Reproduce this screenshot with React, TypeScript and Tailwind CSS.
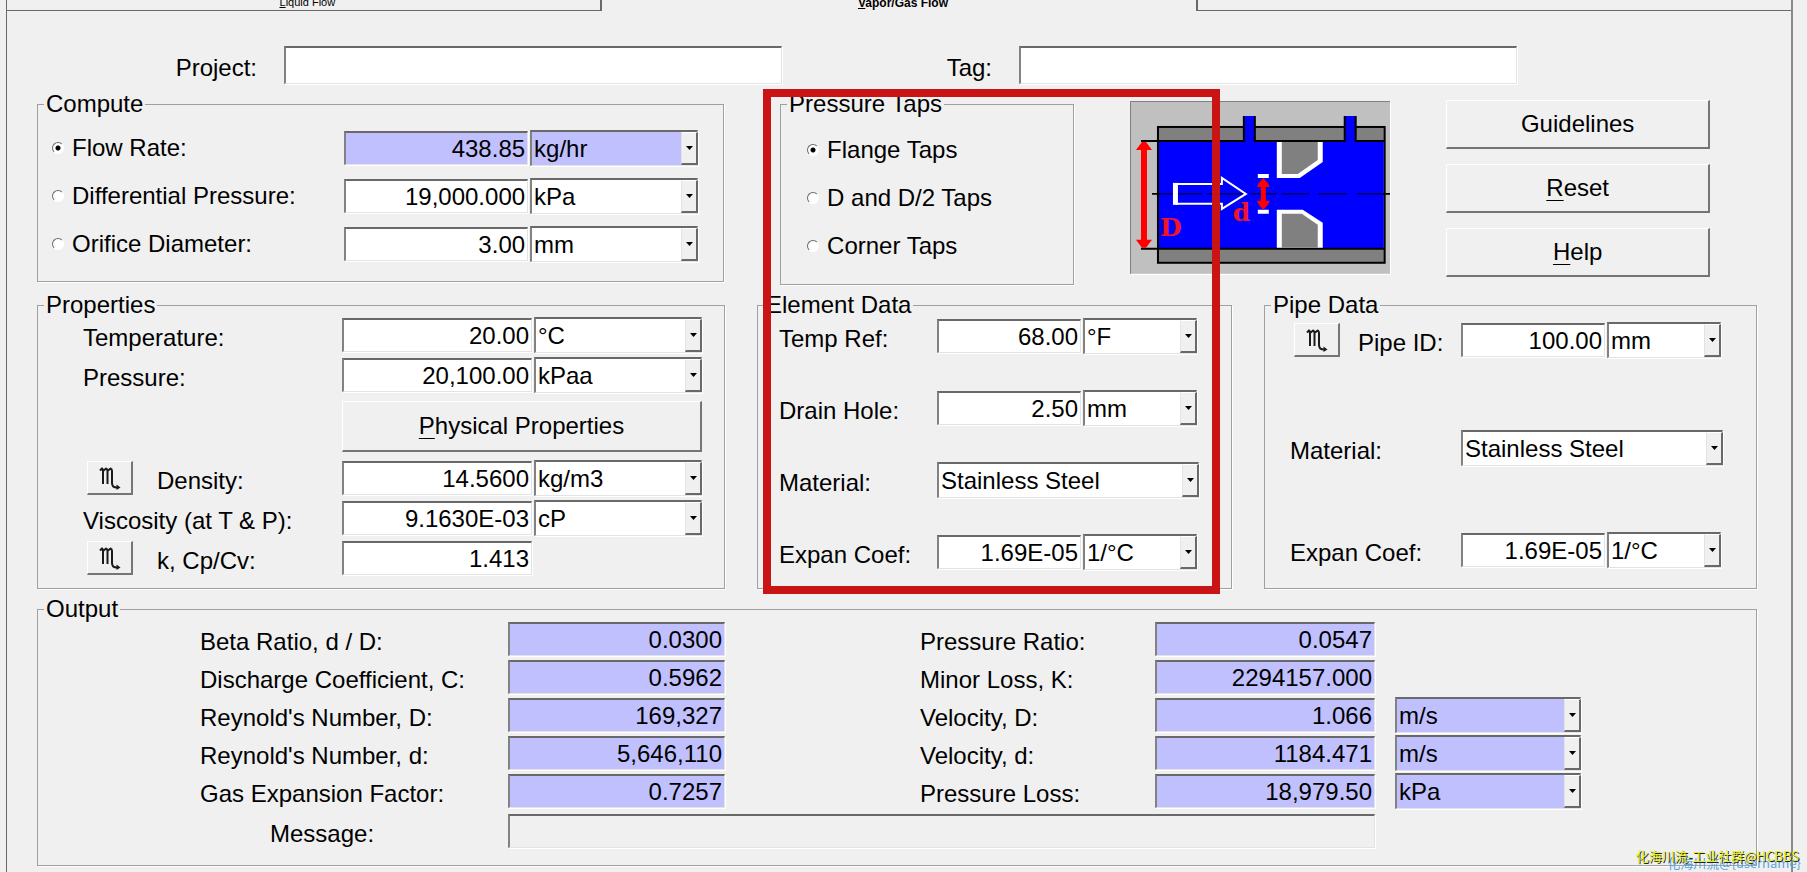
import { ReactNode, useState } from 'react';

// ===== Shared styles =====
const sunken =
  'rounded-none border-t-2 border-l-2 border-b border-r border-t-[#696969] border-l-[#828282] border-b-[#e3e3e3] border-r-[#e3e3e3] shadow-[1px_1px_0_#ffffff]';

// ===== 1. Group: etched fieldset with a caption =====
interface GroupProps {
  title: string;
  children: ReactNode;
  className?: string;
}

function Group({ title, children, className = '' }: GroupProps) {
  return (
    <fieldset className="min-w-0 border border-[#a0a0a0] shadow-[1px_1px_0_#ffffff]">
      <legend className="ml-1.5 px-0.5 leading-6">{title}</legend>
      <div className={className}>{children}</div>
    </fieldset>
  );
}

// ===== 2. ValueBox: numeric entry =====
interface ValueBoxProps {
  id: string;
  value: string;
  computed?: boolean;
  className?: string;
}

function ValueBox({ id, value, computed = false, className = '' }: ValueBoxProps) {
  return (
    <input
      id={id}
      type="text"
      defaultValue={value}
      readOnly={computed}
      className={`h-[34px] min-w-0 pr-0.5 text-right outline-none ${sunken} ${computed ? 'bg-[#c0c0ff]' : 'bg-white'} ${className}`}
    />
  );
}

// ===== 3. Combo: drop-down with a raised arrow =====
interface ComboProps {
  label: string;
  options: string[];
  id?: string;
  computed?: boolean;
  className?: string;
}

function Combo({ label, options, id, computed = false, className = '' }: ComboProps) {
  return (
    <div className={`relative h-9 ${className}`}>
      <select
        id={id}
        aria-label={label}
        className={`h-9 w-full appearance-none pl-0.5 outline-none ${sunken} ${computed ? 'bg-[#c0c0ff]' : 'bg-white'}`}
      >
        {options.map((option) => (
          <option key={option}>{option}</option>
        ))}
      </select>
      <span className="pointer-events-none absolute top-0.5 right-0 bottom-px flex w-[17px] items-center justify-center border-t border-l border-r-2 border-b-2 border-t-white border-l-[#e3e3e3] border-r-[#696969] border-b-[#696969] bg-[#f0f0f0]">
        <svg width="7" height="4" viewBox="0 0 7 4" aria-hidden="true">
          <path d="M0 0h7L3.5 4z" fill="#000" />
        </svg>
      </span>
    </div>
  );
}

// ===== 4. Buttons =====
interface PushButtonProps {
  children: ReactNode;
  label?: string;
  className?: string;
}

function PushButton({ children, label, className = '' }: PushButtonProps) {
  return (
    <button
      type="button"
      aria-label={label}
      className={`flex items-center justify-center border-t border-l border-r-2 border-b-2 border-t-white border-l-white border-r-[#757575] border-b-[#757575] bg-[#f0f0f0] ${className}`}
    >
      {children}
    </button>
  );
}

function MaterialButton({ label }: { label: string }) {
  return (
    <PushButton label={label} className="h-[34px] w-[46px] shrink-0">
      <svg width="22" height="24" viewBox="0 0 22 24" fill="none" stroke="#1a1a1a" aria-hidden="true">
        <path d="M1 4.500L3 2.500C4 3 4 4 4 5V18M4 5L7 2.500C8.500 3 8.500 4 8.500 5V18M8.500 5L11.500 2.500C13 3 13 4 13 5V17C13 20 14.500 21.500 18 21.500" strokeWidth="2" />
        <path d="M17.500 18.500L21.500 21.500L17.500 24z" fill="#1a1a1a" stroke="none" />
      </svg>
    </PushButton>
  );
}

// ===== 5. RadioRow =====
interface RadioRowProps {
  id: string;
  name: string;
  label: string;
  checked: boolean;
  onSelect: () => void;
}

function RadioRow({ id, name, label, checked, onSelect }: RadioRowProps) {
  return (
    <div className="flex h-9 min-w-0 items-center gap-2">
      <input
        id={id}
        type="radio"
        name={name}
        checked={checked}
        onChange={onSelect}
        className="size-3 shrink-0 appearance-none rounded-full border border-t-[#696969] border-l-[#696969] border-r-white border-b-white bg-white checked:bg-[radial-gradient(circle,#000_2px,#fff_3px)]"
      />
      <label htmlFor={id} className="whitespace-nowrap">
        {label}
      </label>
    </div>
  );
}

// ===== 6. Orifice drawing =====
function OrificeDiagram() {
  return (
    <svg viewBox="0 0 261 173" className="block w-full" role="img" aria-label="Orifice plate">
      <rect width="261" height="173" fill="#c0c0c0" />
      <path d="M.5 173V.5H261" fill="none" stroke="#808080" />
      {/* pipe wall and fluid */}
      <rect x="28" y="26" width="227" height="136" fill="#808080" stroke="#000" strokeWidth="2" />
      <rect x="29" y="40" width="225" height="108" fill="#0000ff" />
      <path d="M11 40H255M11 148H255" stroke="#000" strokeWidth="2" />
      {/* taps */}
      <path d="M113 15H126V41H113zM214 15H227V41H214z" fill="#000" />
      <path d="M115 15H124V42H115zM216 15H225V42H216z" fill="#0000ff" />
      {/* orifice plate */}
      <path d="M147 41V77H170L193 61V41zM147 147V109H173L193 122V147z" fill="#fff" />
      <path d="M152 41V73H168L188 59V41zM152 147V113H172L188 124V147z" fill="#808080" />
      {/* flow arrow */}
      <path d="M22 93H30M253 93H261" stroke="#000" strokeWidth="2" />
      <path d="M30 93H72M77 93H114M121 93H147M152 93H179M189 93H217M227 93H253" stroke="#00006c" strokeWidth="2" />
      <path d="M46 83H92V77L116 93L92 108V103H46" fill="none" stroke="#fff" strokeWidth="2" />
      <path d="M43 82H48V104H43z" fill="#fff" />
      {/* dimensions */}
      <path d="M128 73H139V77H128zM128 109H139V113H128z" fill="#fff" />
      <path d="M133.500 77L138 82L140 86H136V100H140L138 104L133.500 109L129 104L127 100H131V86H127L129 82z" fill="#f00" />
      <path d="M12 41H16L19 45L22 49H17V139H22L19 143L16 147H12L9 143L6 139H11V49H6L9 45z" fill="#f00" />
      <text x="30" y="135" fill="#f01428" fontFamily="DejaVu Serif" fontSize="25" fontWeight="700">
        D
      </text>
      <text x="103" y="120" fill="#f01428" fontFamily="DejaVu Serif" fontSize="25" fontWeight="700">
        d
      </text>
    </svg>
  );
}

// ===== Data =====
const computeRows = [
  { id: 'flow-rate', label: 'Flow Rate:', value: '438.85', units: ['kg/hr', 'kg/s'] },
  { id: 'diff-pressure', label: 'Differential Pressure:', value: '19,000.000', units: ['kPa', 'bar'] },
  { id: 'orifice-diameter', label: 'Orifice Diameter:', value: '3.00', units: ['mm', 'in'] },
];

const tapTypes = ['Flange Taps', 'D and D/2 Taps', 'Corner Taps'];

const outputLeft = [
  { id: 'beta', label: 'Beta Ratio, d / D:', value: '0.0300' },
  { id: 'discharge', label: 'Discharge Coefficient, C:', value: '0.5962' },
  { id: 'reynolds-pipe', label: "Reynold's Number, D:", value: '169,327' },
  { id: 'reynolds-orifice', label: "Reynold's Number, d:", value: '5,646,110' },
  { id: 'expansion', label: 'Gas Expansion Factor:', value: '0.7257' },
];

const outputRight = [
  { id: 'pressure-ratio', label: 'Pressure Ratio:', value: '0.0547', units: null },
  { id: 'minor-loss', label: 'Minor Loss, K:', value: '2294157.000', units: null },
  { id: 'velocity-pipe', label: 'Velocity, D:', value: '1.066', units: ['m/s', 'ft/s'] },
  { id: 'velocity-orifice', label: 'Velocity, d:', value: '1184.471', units: ['m/s', 'ft/s'] },
  { id: 'pressure-loss', label: 'Pressure Loss:', value: '18,979.50', units: ['kPa', 'bar'] },
];

const materials = ['Stainless Steel', 'Carbon Steel'];

// ===== 7. Field rows =====
interface FieldLabelProps {
  htmlFor: string;
  children: ReactNode;
  className?: string;
}

function FieldLabel({ htmlFor, children, className = '' }: FieldLabelProps) {
  return (
    <label htmlFor={htmlFor} className={`pt-1.5 whitespace-nowrap ${className}`}>
      {children}
    </label>
  );
}

interface PropertyRowProps {
  id: string;
  label: string;
  value: string;
  units?: string[];
  picker?: boolean;
}

function PropertyRow({ id, label, value, units, picker = false }: PropertyRowProps) {
  return (
    <div className="grid h-9 grid-cols-[1fr_190px_168px] items-center gap-x-0.5">
      {picker ? (
        <div className="flex items-center gap-6 pl-[49px]">
          <MaterialButton label={`Choose ${label}`} />
          <FieldLabel htmlFor={id}>{label}</FieldLabel>
        </div>
      ) : (
        <FieldLabel htmlFor={id} className="pl-[45px]">
          {label}
        </FieldLabel>
      )}
      <ValueBox id={id} value={value} />
      {units && <Combo label={`${label} unit`} options={units} />}
    </div>
  );
}

interface DataRowProps {
  id: string;
  label: string;
  labelWidth: string;
  value?: string;
  options: string[];
  picker?: boolean;
  className?: string;
}

function DataRow({ id, label, labelWidth, value, options, picker = false, className = '' }: DataRowProps) {
  return (
    <div className={`flex h-9 items-center ${className}`}>
      <div className={`flex shrink-0 items-center gap-[18px] ${labelWidth}`}>
        {picker && <MaterialButton label={`Choose ${label}`} />}
        <FieldLabel htmlFor={id}>{label}</FieldLabel>
      </div>
      {value ? (
        <div className="flex items-center gap-0.5">
          <ValueBox id={id} value={value} className="w-36" />
          <Combo label={`${label} unit`} options={options} className="w-[114px]" />
        </div>
      ) : (
        <Combo id={id} label={label} options={options} className="w-[262px]" />
      )}
    </div>
  );
}

// ===== 8. Tabs =====
function Tabs() {
  return (
    <div role="tablist" className="grid h-[11px] grid-cols-3 grid-rows-[11px] text-[11px] leading-3">
      <button
        type="button"
        role="tab"
        aria-selected="false"
        className="flex min-h-0 items-end justify-center border-r-2 border-b border-[#696969] pb-0.5 pl-2"
      >
        <span>
          <u>L</u>iquid Flow
        </span>
      </button>
      <button
        type="button"
        role="tab"
        aria-selected="true"
        className="flex min-h-0 items-end justify-center pb-0.5 pl-2 text-xs leading-3 font-bold"
      >
        <span>
          <u>V</u>apor/Gas Flow
        </span>
      </button>
      <div className="border-b border-l-2 border-[#696969]" />
    </div>
  );
}

export default function App() {
  const [target, setTarget] = useState('flow-rate');
  const [taps, setTaps] = useState('Flange Taps');

  return (
    <div className="relative min-h-screen overflow-hidden bg-[#f0f0f0] pr-3.5 pl-1.5 font-['Liberation_Sans',Arial,sans-serif] text-2xl leading-7 text-black">
      <div className="flex min-h-screen flex-col border-r-2 border-l border-r-[#8a8a8a] border-l-[#696969]">
        <Tabs />
        <main className="flex flex-col gap-2 pr-[34px] pl-[30px]">
          {/* project line */}
          <div className="mt-[35px] grid h-[38px] grid-cols-[247fr_498fr_237fr_498fr_240fr]">
            <label htmlFor="project" className="self-center justify-self-end pt-1.5 pr-[27px]">
              Project:
            </label>
            <input id="project" type="text" className={`min-w-0 bg-white px-1 outline-none ${sunken}`} />
            <label htmlFor="tag" className="self-center justify-self-end pt-1.5 pr-[27px]">
              Tag:
            </label>
            <input id="tag" type="text" className={`min-w-0 bg-white px-1 outline-none ${sunken}`} />
          </div>

          <div className="grid grid-cols-[688fr_294fr_261fr_264fr] items-start gap-x-14 pr-[47px]">
            <Group title="Compute" className="pr-[25px] pl-3.5">
              <div className="flex flex-col gap-3 pt-3.5 pb-[19px]">
                {computeRows.map((row) => (
                  <div key={row.id} className="grid grid-cols-[1fr_184px_168px] items-center gap-x-0.5">
                    <RadioRow
                      id={`solve-${row.id}`}
                      name="compute"
                      label={row.label}
                      checked={target === row.id}
                      onSelect={() => setTarget(row.id)}
                    />
                    <ValueBox id={row.id} value={row.value} computed={target === row.id} />
                    <Combo label={`${row.label} unit`} options={row.units} computed={target === row.id} />
                  </div>
                ))}
              </div>
            </Group>

            <Group title="Pressure Taps" className="pl-[26px]">
              <div className="flex flex-col gap-3 pt-4 pb-5">
                {tapTypes.map((tap) => (
                  <RadioRow
                    key={tap}
                    id={`tap-${tap}`}
                    name="taps"
                    label={tap}
                    checked={taps === tap}
                    onSelect={() => setTaps(tap)}
                  />
                ))}
              </div>
            </Group>

            <div className="mt-[9px] shadow-[1px_1px_0_#ffffff]">
              <OrificeDiagram />
            </div>

            <div className="flex flex-col gap-[15px] pt-2">
              <PushButton className="h-[49px]">Guidelines</PushButton>
              <PushButton className="h-[49px]">
                <span>
                  <u className="decoration-1 underline-offset-4">R</u>eset
                </span>
              </PushButton>
              <PushButton className="h-[49px]">
                <span>
                  <u className="decoration-1 underline-offset-4">H</u>elp
                </span>
              </PushButton>
            </div>
          </div>

          <div className="grid grid-cols-[688fr_475fr_493fr] gap-x-8">
            <Group title="Properties" className="pr-[22px] pb-3">
              <div className="flex flex-col gap-1">
                <PropertyRow id="temperature" label="Temperature:" value="20.00" units={['°C', '°F']} />
                <PropertyRow id="pressure" label="Pressure:" value="20,100.00" units={['kPaa', 'bara']} />
              </div>
              <PushButton className="my-2 ml-auto h-[51px] w-[360px]">
                <span>
                  <u className="decoration-1 underline-offset-4">P</u>hysical Properties
                </span>
              </PushButton>
              <div className="flex flex-col gap-1">
                <PropertyRow id="density" label="Density:" value="14.5600" units={['kg/m3', 'lb/ft3']} picker />
                <PropertyRow id="viscosity" label="Viscosity (at T & P):" value="9.1630E-03" units={['cP', 'Pa.s']} />
                <PropertyRow id="k" label="k, Cp/Cv:" value="1.413" picker />
              </div>
            </Group>

            <Group title="Element Data" className="pt-px pl-[21px]">
              <div className="flex flex-col gap-9">
                <DataRow id="temp-ref" label="Temp Ref:" labelWidth="w-[158px]" value="68.00" options={['°F', '°C']} />
                <DataRow id="drain" label="Drain Hole:" labelWidth="w-[158px]" value="2.50" options={['mm', 'in']} />
                <DataRow id="element-material" label="Material:" labelWidth="w-[158px]" options={materials} />
                <DataRow id="element-coef" label="Expan Coef:" labelWidth="w-[158px]" value="1.69E-05" options={['1/°C', '1/°F']} />
              </div>
            </Group>

            <Group title="Pipe Data" className="pt-[5px] pl-[25px]">
              <DataRow id="pipe-id" label="Pipe ID:" labelWidth="w-[171px] pl-1" value="100.00" options={['mm', 'in']} picker />
              <DataRow id="pipe-material" label="Material:" labelWidth="w-[171px]" options={materials} className="mt-[72px]" />
              <DataRow id="pipe-coef" label="Expan Coef:" labelWidth="w-[171px]" value="1.69E-05" options={['1/°C', '1/°F']} className="mt-[66px]" />
            </Group>
          </div>

          <Group title="Output" className="pb-4 pl-[162px]">
            <div className="flex gap-[195px]">
              <div className="flex flex-col gap-0.5">
                {outputLeft.map((row) => (
                  <div key={row.id} className="grid h-9 grid-cols-[308px_217px] items-center">
                    <FieldLabel htmlFor={row.id}>{row.label}</FieldLabel>
                    <ValueBox id={row.id} value={row.value} computed />
                  </div>
                ))}
              </div>
              <div className="flex flex-col gap-0.5">
                {outputRight.map((row) => (
                  <div key={row.id} className="grid h-9 grid-cols-[235px_220px_206px] items-center">
                    <FieldLabel htmlFor={row.id}>{row.label}</FieldLabel>
                    <ValueBox id={row.id} value={row.value} computed />
                    {row.units && <Combo label={`${row.label} unit`} options={row.units} computed className="ml-5" />}
                  </div>
                ))}
              </div>
            </div>
            <div className="mt-1 grid h-9 grid-cols-[308px_867px] items-center">
              <FieldLabel htmlFor="message" className="pl-[70px]">
                Message:
              </FieldLabel>
              <input id="message" type="text" readOnly className={`h-[34px] min-w-0 bg-[#f0f0f0] px-1 outline-none ${sunken}`} />
            </div>
          </Group>
        </main>
      </div>

      {/* highlight over the taps and element panels */}
      <div className="pointer-events-none absolute top-[89px] left-[763px] h-[505px] w-[457px] border-8 border-[#c81414]" />

      <div className="pointer-events-none absolute right-1.5 bottom-px font-['Noto_Sans_CJK_SC',sans-serif] text-[13px] leading-4 whitespace-nowrap text-[#5ba3dc]">
        化海川流@{'{username}'}
      </div>
      <div className="pointer-events-none absolute right-2 bottom-2 font-['Noto_Sans_CJK_SC',sans-serif] text-[13px] leading-4 whitespace-nowrap text-[#e6f01e] [text-shadow:1px_1px_0_#222]">
        化海川流-工业社群@HCBBS
      </div>
    </div>
  );
}
